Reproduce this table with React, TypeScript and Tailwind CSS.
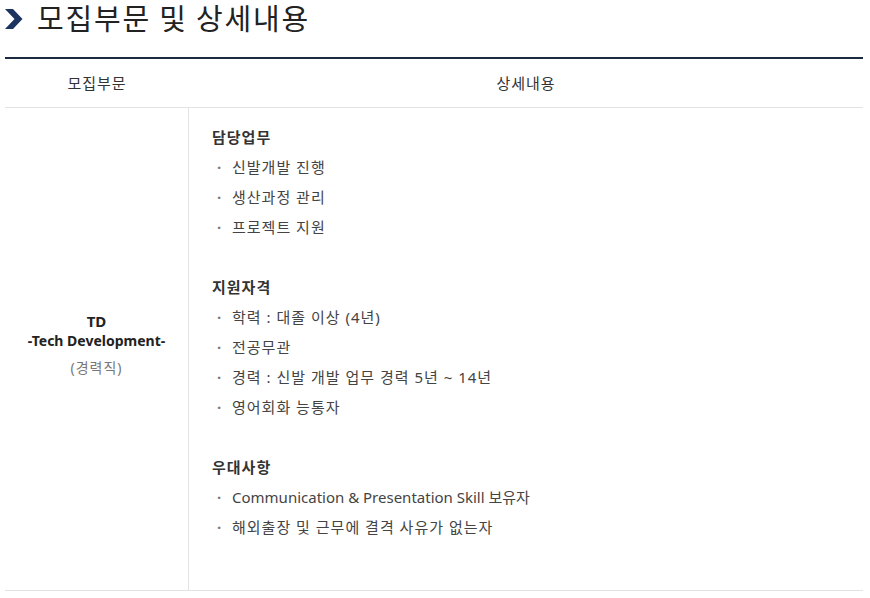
import React from "react";

const font = { fontFamily: '"Noto Sans", "Noto Sans CJK KR", sans-serif' };

const sections: { title: string; items: { t: string; latin?: boolean }[] }[] = [
  { title: "담당업무", items: [{ t: "신발개발 진행" }, { t: "생산과정 관리" }, { t: "프로젝트 지원" }] },
  {
    title: "지원자격",
    items: [{ t: "학력 : 대졸 이상 (4년)" }, { t: "전공무관" }, { t: "경력 : 신발 개발 업무 경력 5년 ~ 14년" }, { t: "영어회화 능통자" }],
  },
  {
    title: "우대사항",
    items: [{ t: "Communication & Presentation Skill 보유자", latin: true }, { t: "해외출장 및 근무에 결격 사유가 없는자" }],
  },
];

export default function App() {
  return (
    <div className="w-[870px] h-[598px] bg-white overflow-hidden" style={font}>
      <div className="flex items-center h-[37px] pb-[3px] pl-[5px]">
        <svg width="18" height="20" viewBox="0 0 18 20" className="mt-[4px] shrink-0">
          <path d="M0 0 H8 L17.5 10 L8 20 H0 L9.5 10 Z" fill="#1c3560" />
        </svg>
        <h1
          className="ml-[14px] text-[29px] leading-[34px] text-[#222] tracking-[1.8px] whitespace-nowrap"
          style={{ fontFamily: '"Noto Sans CJK KR", sans-serif', fontWeight: 400 }}
        >
          모집부문 및 상세내용
        </h1>
      </div>
      <div className="mx-[5px] mt-[20px] w-[858px] border-t-2 border-[#1b2b40]">
        <div className="flex h-[49px] items-center border-b border-[#e3e3e3] text-[15px] text-[#333] tracking-[1px]">
          <div className="w-[184px] text-center">모집부문</div>
          <div className="flex-1 text-center">상세내용</div>
        </div>
        <div className="flex border-b border-[#e3e3e3]">
          <div className="w-[184px] border-r border-[#e3e3e3] flex flex-col items-center justify-center pb-[10px]">
            <div className="text-[15px] font-bold text-[#222] leading-[20px]">TD</div>
            <div className="text-[14px] font-bold text-[#222] leading-[20px]">-Tech Development-</div>
            <div className="text-[14px] text-[#777] leading-[20px] mt-[7px] tracking-[1px]">(경력직)</div>
          </div>
          <div className="flex-1 pl-[23px] pt-[14px] pb-[18px]">
            {sections.map((s) => (
              <div key={s.title} className="mb-[30px]">
                <div className="text-[15px] font-bold text-[#333] leading-[30px] tracking-[1px]">{s.title}</div>
                {s.items.map((it) => (
                  <div key={it.t} className="flex text-[15px] text-[#444] leading-[30px]">
                    <span className="w-[20px] pl-[5px] text-[#777] font-bold">·</span>
                    <span className={it.latin ? "" : "tracking-[1px]"}>{it.t}</span>
                  </div>
                ))}
              </div>
            ))}
          </div>
        </div>
      </div>
    </div>
  );
}
